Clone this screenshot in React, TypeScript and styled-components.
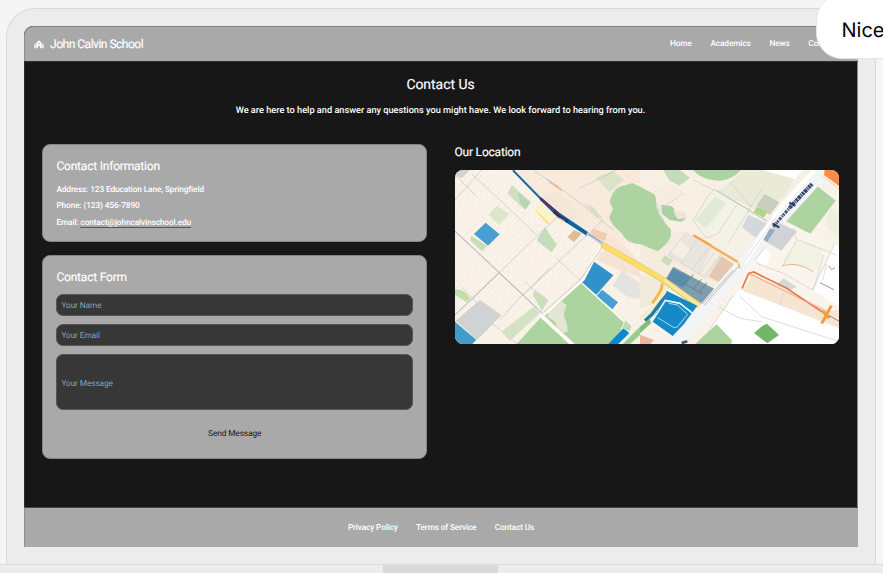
import React from 'react';
import styled, { createGlobalStyle, css } from 'styled-components';

const GlobalStyle = createGlobalStyle`
  *, *::before, *::after { box-sizing: border-box; }
  html, body { margin: 0; padding: 0; overflow: hidden; background: #f5f5f5; }
  body {
    font-family: Roboto, "Liberation Sans", sans-serif;
    color: #fff;
    text-rendering: geometricPrecision;
  }
  h1, h2, p { margin: 0; font-weight: 400; }
`;

const Stage = styled.div`
  position: relative;
  width: 883px;
  height: 573px;
  overflow: hidden;
  padding-top: 8px;
  background: #f5f5f5;
`;

const Device = styled.div`
  width: 870px;
  height: 556px;
  margin-left: 6px;
  padding: 17px 18px 0 17px;
  background: #ececec;
  border: 1px solid #d9d9d9;
  border-bottom: 0;
  border-radius: 29px 29px 0 0;
`;

const Screen = styled.div`
  display: flex;
  flex-direction: column;
  width: 834px;
  height: 521px;
  overflow: hidden;
  background: #171717;
  border-radius: 9px 9px 0 0;
`;

const Base = styled.div`
  display: flex;
  height: 9px;
  padding-left: 383px;
  background: #ececec;
  border-top: 1px solid #dedede;
`;

const Notch = styled.div`
  width: 115px;
  height: 8px;
  background: #d9d9d9;
`;

const Header = styled.header`
  display: flex;
  align-items: center;
  justify-content: space-between;
  flex: none;
  height: 35px;
  padding: 0 10px 0 9px;
  background: #a9a9a9;
  border-top: 1px solid #808080;
  border-left: 1px solid #8f8f8f;
  border-radius: 9px 9px 0 0;
`;

const Brand = styled.div`
  display: flex;
  align-items: center;
  gap: 6px;
  font-size: 12.1px;
  letter-spacing: -0.53px;
  line-height: 16px;
  white-space: nowrap;
  -webkit-text-stroke: 0.15px #fff;
  svg { width: 10px; height: 9px; }
`;

const Nav = styled.nav<{ $footer?: boolean }>`
  display: flex;
  gap: ${(p) => (p.$footer ? 18.3 : 18.7)}px;
  margin-top: ${(p) => (p.$footer ? 1 : -1)}px;
  font-size: 8.3px;
  font-weight: 500;
  letter-spacing: ${(p) => (p.$footer ? -0.15 : -0.12)}px;
  line-height: 12px;
  white-space: nowrap;
`;

const Main = styled.main`
  flex: none;
  height: 446px;
  padding: 13px 18px 0 17px;
  border-left: 1px solid #2b2b2b;
  border-right: 1px solid #8a8a8a;
  border-top: 1px solid #303030;
`;

const Title = styled.h1`
  font-size: 13.92px;
  line-height: 20px;
  text-align: center;
  -webkit-text-stroke: 0.15px #fff;
`;

const Intro = styled.p`
  && { font-weight: 500; }
  margin-top: 9px;
  font-size: 9.2px;
  line-height: 14px;
  text-align: center;
  white-space: nowrap;
`;

const Columns = styled.div`
  display: grid;
  grid-template-columns: 385px 384.5px;
  justify-content: space-between;
  margin-top: 26px;
`;

const Column = styled.div`
  display: flex;
  flex-direction: column;
  gap: 13px;
`;

const Card = styled.section<{ $height: number }>`
  height: ${(p) => p.$height}px;
  padding: 13px 13px 0 13.4px;
  background: #a9a9a9;
  border: 1px solid #858585;
  border-radius: 8px;
`;

const Heading = styled.h2`
  font-size: 12px;
  letter-spacing: -0.2px;
  line-height: 16px;
  -webkit-text-stroke: 0.15px #fff;
`;

const Detail = styled.p<{ $gap: number }>`
  && { font-weight: 500; }
  margin-top: ${(p) => p.$gap}px;
  font-size: 8.3px;
  letter-spacing: -0.12px;
  line-height: 12px;
`;

const Mail = styled.span`
  display: inline-block;
  line-height: 9px;
  box-shadow: inset 0 -1px #555;
`;

const Form = styled.form`
  display: flex;
  flex-direction: column;
  gap: 8px;
  margin-top: 9px;
`;

const Input = styled.input<{ $height: number; $drop: number }>`
  display: block;
  width: 100%;
  height: ${(p) => p.$height}px;
  padding: ${(p) => p.$drop}px 4px 0;
  background: #373737;
  border: 1px solid #555;
  border-radius: 7px;
  color: #fff;
  font-family: Roboto, "Liberation Sans", sans-serif;
  font-size: 8.3px;
  letter-spacing: -0.1px;
  text-rendering: geometricPrecision;
  outline: 0;
  &::placeholder { color: #83a0bd; opacity: 1; }
`;

const Submit = styled.button`
  align-self: center;
  height: 20px;
  margin-top: 6px;
  padding: 0;
  background: transparent;
  border: 0;
  color: #171717;
  font: 400 8.3px/20px Roboto, "Liberation Sans", sans-serif;
  letter-spacing: -0.1px;
  text-rendering: geometricPrecision;
`;

const MapFrame = styled.div`
  height: 174px;
  margin-top: 10px;
  overflow: hidden;
  border-radius: 8px;
  svg { display: block; }
`;

const Footer = styled.footer`
  display: flex;
  align-items: center;
  justify-content: center;
  flex: none;
  height: 40px;
  padding-right: 1px;
  background: #a9a9a9;
  border-top: 1px solid #444;
  border-left: 1px solid #8f8f8f;
`;

const Bubble = styled.div`
  position: absolute;
  top: -6px;
  left: 816px;
  width: 120px;
  height: 65px;
  padding: 23px 0 0 24.5px;
  background: #fff;
  border: 1px solid #e5e5e5;
  border-radius: 26px;
  color: #000;
  font: 400 20px/24px Inter, sans-serif;
`;

function SchoolIcon() {
  return (
    <svg viewBox="0 0 30 27" fill="#fff" aria-hidden="true">
      <path
        fillRule="evenodd"
        d="M15 1L23 9V25H18V20A3 3 0 0 0 12 20V25H7V9ZM15 8A2.6 2.6 0 1 0 15 13.2A2.6 2.6 0 1 0 15 8Z"
      />
      <path d="M5 10V25H1V14ZM25 10L29 14V25H25Z" />
    </svg>
  );
}

function CityMap() {
  return (
    <svg width="385" height="174" viewBox="0 0 385 174" aria-label="Map">
      <defs>
        <pattern id="lots" width="31" height="25" patternUnits="userSpaceOnUse" patternTransform="rotate(-42)">
          <path d="M0 0H31M0 0V25M0 12H31M11 0V12M21 12V25" fill="none" stroke="#cfc8ba" strokeWidth="1" opacity=".4" />
        </pattern>
        <pattern id="lotsFine" width="19" height="14" patternUnits="userSpaceOnUse" patternTransform="rotate(32)">
          <path d="M0 0H19M0 0V14" fill="none" stroke="#bfc3bd" strokeWidth="1" opacity=".4" />
        </pattern>
      </defs>
      <rect width="385" height="174" fill="#faf3e9" />
      <g transform="translate(-15 -30) scale(.33333)">
        <path d="M220 90H600V310H490L440 280L350 225L300 170Z" fill="#f9ecdf" />
        <path d="M45 90H600V612H45Z" fill="url(#lots)" />
        <path d="M45 90H90L65 115L45 105Z" fill="#cfd4cf" />
        <path d="M215 135L272 185L255 210L203 160Z" fill="#c3dbb8" opacity=".8" />
        <path d="M232 157L272 187L257 208L242 190Z" fill="#a9d3a8" opacity=".7" />
        <path d="M170 198L209 222L177 255L147 224Z" fill="#dde6ca" />
        <path d="M345 166L440 282L350 225L300 173Z" fill="#f4e7d8" />
        <path d="M346 150L395 190L440 257L382 236L305 170Z" fill="#f6e6d6" opacity=".7" />
        <path d="M318 115L350 135L370 154L360 151L330 130Z" fill="#f4bd91" />
        <path d="M300 188L358 230L325 253L286 207Z" fill="#fcf3cb" />
        <path d="M286 207L328 250L321 251L285 210Z" fill="#f8df78" />
        <path d="M520 93L552 120L508 156L467 112Z" fill="#d9e4c9" />
        <path d="M430 190L460 202L490 238L470 229Z" fill="#d5dfc2" />
        <path d="M315 262L351 315L334 337L290 301Z" fill="#c6ddb9" />
        <path d="M94 287L140 318L126 334L90 300Z" fill="#c6ddb9" />
        <path d="M403 270L425 281L402 306L382 291Z" fill="#ddbd96" />
        <path d="M460 266L502 281L495 304L450 286Z" fill="#efcdb5" />
        <path d="M499 285L550 312L600 365V395L490 337Z" fill="#f8e5d6" />
        <path d="M485 334L600 388V412L552 397L467 359Z" fill="#f7e3d5" />
        <path d="M45 275L175 397L310 520L390 607M45 525L110 465L180 397L265 312L348 235M96 103L180 180L290 285M125 90L45 180M45 105L110 170M280 90L370 150L520 270M175 397L250 465L370 350L490 240M420 145L530 90M350 355L430 430M180 540L240 472L330 385M255 425L320 490M130 530L230 610M65 440L130 510" fill="none" stroke="#c2c2c6" strokeWidth="2" />
        <path d="M45 273L178 397L310 525M45 525L178 397" fill="none" stroke="#98a2b5" strokeWidth="2" />
        <path d="M137 248L179 283L144 317L102 282Z" fill="#499fd1" />
        <path d="M45 450Q64 440 92 475L80 487L45 465Z" fill="#c5ddac" />
        <path d="M120 480L185 526L112 599L47 542Z" fill="#d0d3d4" />
        <path d="M45 545L109 599L97 612H45Z" fill="#419ccc" />
        <path d="M280 500L299 520L210 602L185 575Z" fill="#d2e2c3" />
        <path d="M285 449L325 480L306 512L278 464Z" fill="#c9dfba" />
        <path d="M303 532L388 612H230Z" fill="#acd49e" />
        <path d="M423 427L552 545L542 570L512 612H400L312 525Z" fill="#acd49e" />
        <path d="M366 484L380 496L371 523L382 558L383 575L370 579L350 560L345 545L323 530L325 513Z" fill="#e5e5d4" />
        <path d="M460 364L520 406L469 464L422 425Z" fill="#3391ca" />
        <path d="M486 449L534 487L517 508L470 468Z" fill="#459fd3" />
        <path d="M546 392L600 430V477L562 470L518 437Z" fill="#e4e3df" />
        <path d="M550 565L568 579L535 612H505Z" fill="#098ace" />
        <path d="M556 540L575 560L568 574L548 565Z" fill="#bddbb2" />
        <path d="M600 560V585L570 612H548Z" fill="#9ccb90" />
        <path d="M300 524L405 620" fill="none" stroke="#fffef9" strokeWidth="11" />
        <path d="M312 524L430 418L487 310" fill="none" stroke="#fffdf5" strokeWidth="8" />
        <path d="M312 517L423 417L488 318" fill="none" stroke="#b8b4a7" strokeWidth="2" />
        <path d="M423 427L552 545" fill="none" stroke="#fffdf5" strokeWidth="4" />
        <path d="M219 91L300 174L350 216L440 281" fill="none" stroke="#16699f" strokeWidth="6" />
        <path d="M300 173L322 190L360 220L445 277L440 287L390 255L352 231L300 180Z" fill="#0b65a6" />
        <path d="M300 174L355 221" stroke="#5b3455" strokeWidth="7" />
        <path d="M340 216L384 245" stroke="#24315c" strokeWidth="6" />
        <path d="M350 230L375 242" stroke="#db6452" strokeWidth="3" />
        <path d="M440 280L490 314" stroke="#b7cfd9" strokeWidth="7" />
        <path d="M444 281L493 310" stroke="#5b7c94" strokeWidth="2" />
      </g>
      <g transform="translate(185 -10) scale(.33333)">
        <path d="M0 30H550L320 330L270 300L150 220L93 225L45 110L0 90Z" fill="#f8f0e4" />
        <path d="M0 30H600V552H0Z" fill="url(#lotsFine)" opacity=".7" />
        <path d="M80 70L130 95L50 155L20 110Z" fill="#f8e9df" opacity=".7" />
        <path d="M70 30H120L150 53L118 77L87 61Z" fill="#c4dcb7" />
        <path d="M300 30H480L430 110L350 150L235 95L302 40Z" fill="#e4ead4" opacity=".75" />
        <path d="M160 30H302C290 46 270 58 240 62C204 61 175 50 160 30Z" fill="#abd3a1" />
        <path d="M370 30H488L466 58L385 35Z" fill="#fff" />
        <path d="M220 95L370 170L270 280L165 185Z" fill="#f3f2e6" />
        <path d="M225 110L260 130L198 204L165 180Z" fill="#d4e5c9" opacity=".6" />
        <path d="M64 134L96 139L111 160L135 159L137 177L123 185L89 180L66 161Z" fill="#a9d0a0" />
        <path d="M100 150L134 158L137 175L114 178L105 165Z" fill="#eee6d5" />
        <path d="M373 102L418 126L390 165L350 136Z" fill="#c8cfbf" />
        <path d="M352 139L382 157L371 173L341 156Z" fill="#b0d58d" />
        <path d="M325 164L380 190L353 237L306 203Z" fill="#d4d8da" />
        <path d="M280 190L310 205L340 245L300 300L240 270Z" fill="#f6f1e7" />
        <path d="M0 258L93 219L140 213L300 315L206 438L70 360L0 320Z" fill="#f5ecdf" />
        <path d="M140 220L215 263L180 340L85 285Z" fill="#e3e3e0" opacity=".7" />
        <path d="M118 238L152 270L135 301L90 273Z" fill="#f4f0e1" />
        <path d="M75 286L99 300L85 318L62 303Z" fill="#cbdcbc" />
        <path d="M244 289L291 318L248 371L205 350Z" fill="#e4c6b1" />
        <path d="M0 340L75 370L35 438L0 445Z" fill="#f2ebdc" />
        <path d="M45 120L90 225M130 100L50 155M160 60L221 90L203 110L160 182L200 235L235 220L290 135M231 90L380 184M270 65L333 140L265 250M370 80L320 160M140 215L85 285L190 350L250 275M170 240L125 310M205 265L155 330M223 278L178 342M240 288L194 358" fill="none" stroke="#cbcfc8" strokeWidth="2" />
        <path d="M222 88L380 182" stroke="#b7aeb3" strokeWidth="2" />
        <path d="M450 195L598 260V552H200L320 330Z" fill="#faf5ec" />
        <path d="M524 72L587 122L511 221L425 177Z" fill="#acd3a0" />
        <path d="M570 145L600 157V235L555 198Z" fill="#edf0df" />
        <path d="M370 260L392 280L378 320L350 300Z" fill="#fff" />
        <path d="M478 238L545 263L535 330L430 312L433 290Z" fill="#f2f2e4" />
        <path d="M584 253L600 260V440L520 391Z" fill="#fff" />
        <path d="M298 390L598 487V552H188L236 470Z" fill="#fff" />
        <path d="M340 340L570 454L598 448V505L308 392Z" fill="#f7e5d3" />
        <path d="M550 30L430 162L320 300L187 455L105 555" fill="none" stroke="#f3f4f5" strokeWidth="42" />
        <path d="M530 24L427 135L312 310" fill="none" stroke="#fff" strokeWidth="13" />
        <path d="M410 185L471 214L424 272L369 240Z" fill="#cfd3d5" />
        <path d="M390 205L405 211L381 246L371 238Z" fill="#93acc0" />
        <path d="M410 170L309 310M345 300L375 262" fill="none" stroke="#c9ced2" strokeWidth="2" />
        <path d="M192 437L297 318M187 432L280 330" fill="none" stroke="#c4b8ab" strokeWidth="3" />
        <path d="M460 204L470 238L590 285M470 240L430 315M583 253L518 390L430 340L350 310M550 285L520 390M430 400L420 435M300 410L365 470L598 545M280 405L180 552M235 440L300 475L364 485M560 310L548 360" fill="none" stroke="#d0cac5" strokeWidth="2" />
        <path d="M425 318Q470 302 520 335" fill="none" stroke="#e5b699" strokeWidth="3" />
        <path d="M408 375L430 355L470 380L449 391Z" fill="#d4d8da" />
        <path d="M540 368L582 389M566 318L575 329L585 323" fill="none" stroke="#999" strokeWidth="3" />
        <path d="M400 200L450 142" fill="none" stroke="#445575" strokeWidth="9" strokeDasharray="9 3 4 2 6 3" />
        <path d="M450 142L516 72" fill="none" stroke="#33466d" strokeWidth="12" strokeDasharray="7 2 10 2 4 2" />
        <path d="M398 190L418 203M448 128L466 138" stroke="#263c64" strokeWidth="6" />
        <path d="M554 30H600V81L580 65L552 45Z" fill="#fa8d45" />
        <path d="M548 48L600 89" stroke="#f6c9a6" strokeWidth="3" />
        <path d="M159 226L294 306" fill="none" stroke="#f7ad5b" strokeWidth="7" />
        <path d="M163 226L215 255" fill="none" stroke="#f2953d" strokeWidth="3" />
        <path d="M295 310L300 325" stroke="#edb57e" strokeWidth="5" />
        <path d="M100 320L222 386L185 430L75 360Z" fill="#7e9daf" />
        <path d="M98 325L150 351L129 383L82 357Z" fill="#5b8eaa" />
        <path d="M135 373L160 344M158 389L184 358M178 398L200 368M105 355L188 402" stroke="#668092" strokeWidth="3" />
        <path d="M-115 253L0 319L70 360L178 437" fill="none" stroke="#d9ba59" strokeWidth="17" />
        <path d="M-115 253L0 319L74 361" fill="none" stroke="#fddd67" strokeWidth="15" />
        <path d="M72 360L178 437" fill="none" stroke="#fae79b" strokeWidth="13" />
        <path d="M0 470L50 427L73 371L87 385L52 440L0 480Z" fill="#f6ebc8" />
        <path d="M66 370C70 390 50 409 37 430" fill="none" stroke="#f4b842" strokeWidth="8" />
        <path d="M87 397L60 430L36 463L15 482" fill="none" stroke="#227c9f" strokeWidth="10" />
        <path d="M81 393L172 437L132 492L98 528L36 484Z" fill="#168ac6" />
        <path d="M36 484L76 421L120 430L158 460" fill="none" stroke="#f3f9fb" strokeWidth="5" />
        <path d="M86 430L112 435L143 463L112 501Q106 506 97 500L53 473" fill="none" stroke="#b2daec" strokeWidth="3" />
        <path d="M0 500L30 475L33 490L0 520Z" fill="#81c078" />
        <path d="M0 524L42 540L32 552H0Z" fill="#edb8a1" />
        <path d="M230 493L276 541L274 552H165Z" fill="#acd39d" />
        <path d="M381 491L417 525L382 550L342 519L364 500L371 496Z" fill="#72b668" />
        <path d="M306 386L326 340L341 336L440 385L553 460" fill="none" stroke="#e87945" strokeWidth="5" />
        <path d="M320 342L343 348L560 455" fill="none" stroke="#f4a276" strokeWidth="3" />
        <path d="M574 437L545 491M548 454L568 474" fill="none" stroke="#f49b40" strokeWidth="9" />
        <path d="M566 466L598 484" stroke="#555" strokeWidth="2" />
        <path d="M125 549L142 544" stroke="#405770" strokeWidth="8" />
      </g>
      <g transform="translate(-15 -30) scale(.33333)">
        <path d="M509 185C514 165 524 145 544 139L577 129L600 140L643 163C653 178 643 190 655 215C663 232 672 245 692 268C696 287 690 303 672 318L653 334L600 312C574 311 555 300 547 282C532 267 513 254 508 232L519 207Z" fill="#acd3a0" />
      </g>
    </svg>
  );
}

export default function App() {
  return (
    <Stage>
      <GlobalStyle />
      <Device>
        <Screen>
          <Header>
            <Brand><SchoolIcon /><span>John Calvin School</span></Brand>
            <Nav><span>Home</span><span>Academics</span><span>News</span><span>Contact Us</span></Nav>
          </Header>
          <Main>
            <Title>Contact Us</Title>
            <Intro>We are here to help and answer any questions you might have. We look forward to hearing from you.</Intro>
            <Columns>
              <Column>
                <Card $height={98}>
                  <Heading>Contact Information</Heading>
                  <Detail $gap={10}>Address: 123 Education Lane, Springfield</Detail>
                  <Detail $gap={4}>Phone: (123) 456-7890</Detail>
                  <Detail $gap={5}>Email: <Mail>contact@johncalvinschool.edu</Mail></Detail>
                </Card>
                <Card $height={204}>
                  <Heading>Contact Form</Heading>
                  <Form>
                    <Input $height={22} $drop={2} placeholder="Your Name" />
                    <Input $height={22} $drop={2} placeholder="Your Email" />
                    <Input $height={56} $drop={3} placeholder="Your Message" />
                    <Submit type="button">Send Message</Submit>
                  </Form>
                </Card>
              </Column>
              <section>
                <Heading>Our Location</Heading>
                <MapFrame><CityMap /></MapFrame>
              </section>
            </Columns>
          </Main>
          <Footer>
            <Nav $footer><span>Privacy Policy</span><span>Terms of Service</span><span>Contact Us</span></Nav>
          </Footer>
        </Screen>
      </Device>
      <Base><Notch /></Base>
      <Bubble>Nice</Bubble>
    </Stage>
  );
}
